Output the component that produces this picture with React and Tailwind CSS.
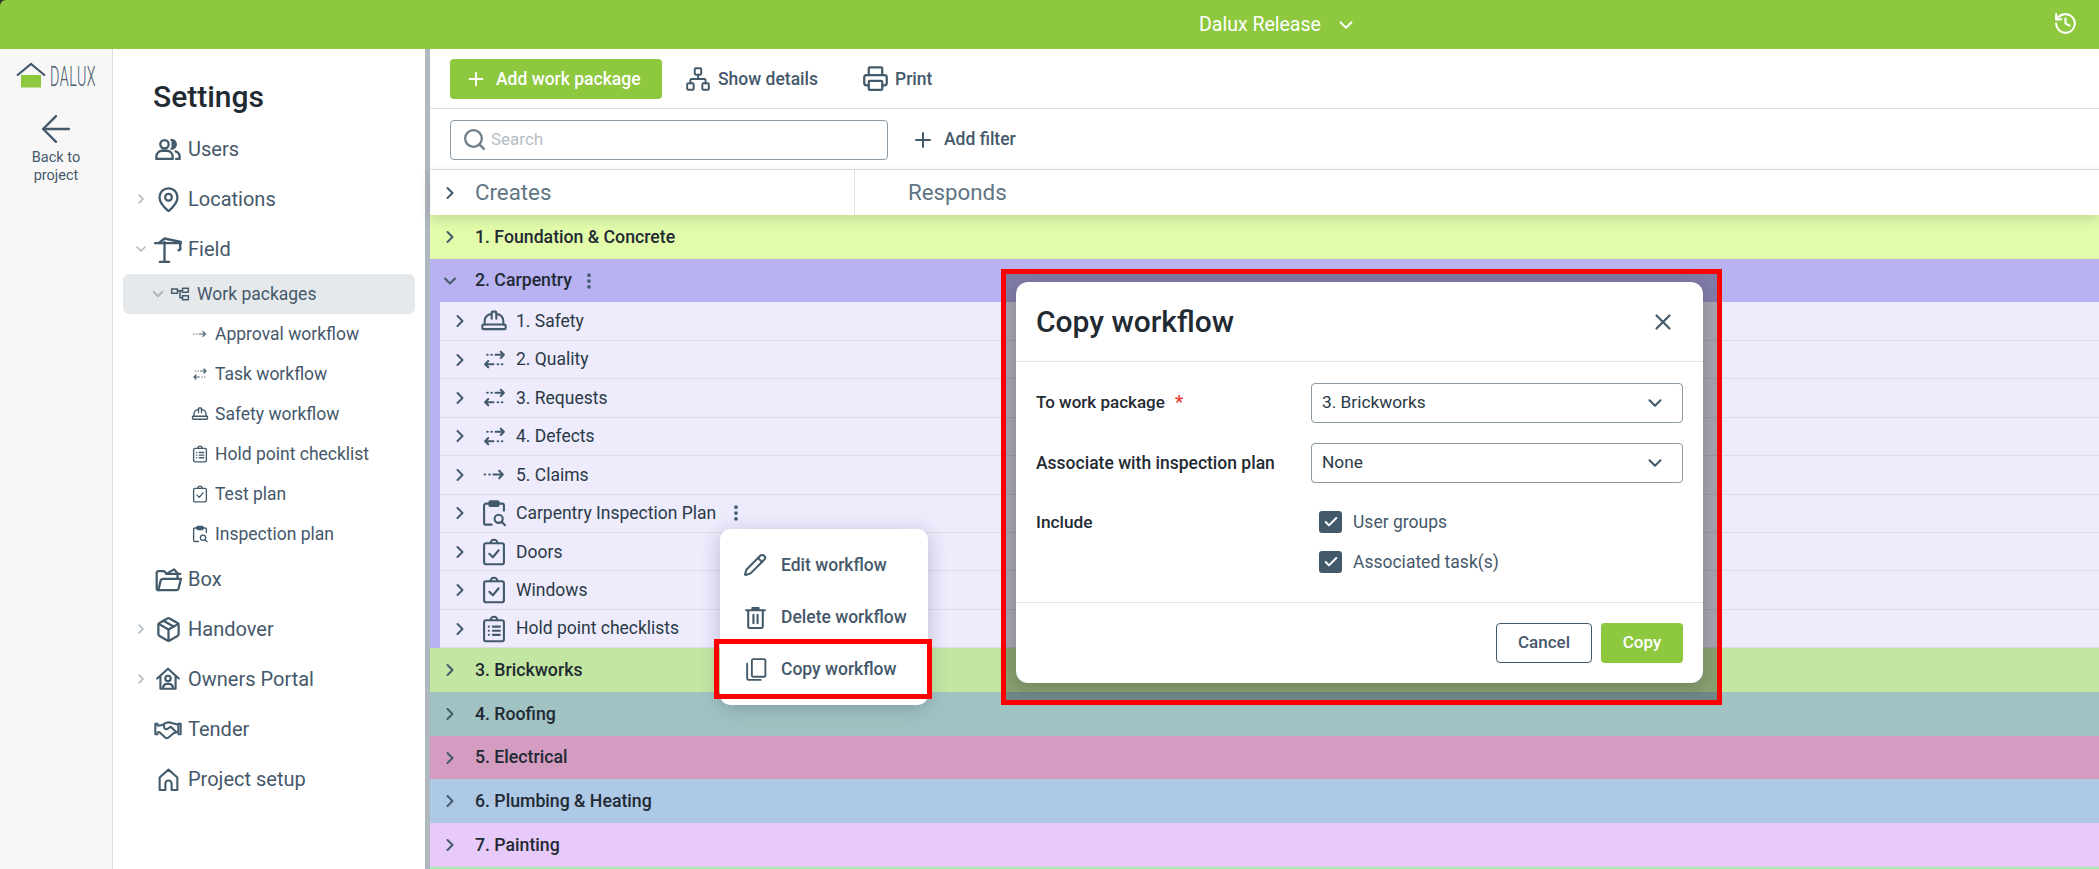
import React from "react";
import { ChevronRight, ChevronDown, MapPin, Package, HardHat, Plus, Network, Printer, Search, EllipsisVertical, Pencil, X, Check, History, ArrowLeft } from "lucide-react";

const S = ({ size = 24, sw = 2, children, className = "" }) => (
  <svg width={size} height={size} viewBox="0 0 24 24" fill="none" stroke="currentColor" strokeWidth={sw} strokeLinecap="round" strokeLinejoin="round" className={className}>{children}</svg>
);
const UsersIcon = (p) => (
  <S {...p}><circle cx="9" cy="8" r="3.6" /><path d="M2 20.5v-2a5 5 0 0 1 5-5h4a5 5 0 0 1 5 5v2z" /><path d="M15 4.3a3.7 3.7 0 0 1 0 7.4" fill="currentColor" /><path d="M18.5 14a5 5 0 0 1 3.5 4.7v1.8h-3" /></S>
);
const Crane = (p) => (
  <S {...p}><path d="M9 6v17M5 23h8M1 7h22M4 7l5-4 14 3M22.5 7v5" /><path d="M22.5 12a1.2 1.2 0 0 1-1.5 1" /></S>
);
const WorkPkg = (p) => (
  <S {...p}><rect x="2" y="6" width="7" height="5" /><rect x="15" y="5" width="7" height="5" /><rect x="15" y="14" width="7" height="5" /><path d="M9 8h3v8.500h3M12 8h3" /></S>
);
const OneWay = (p) => (
  <S {...p}><path d="M2.500 12h.5M7 12h.5M11 12h9M16.500 8.500l3.500 3.500-3.500 3.500" /></S>
);
const TwoWay = (p) => (
  <S {...p}><path d="M5 7.500h.5M9 7.500h.5M13 7.500h8M18 4.500l3 3-3 3" /><path d="M19 16.500h.5M15 16.500h.5M11 16.500h-8M6 13.500l-3 3 3 3" /></S>
);
const InspectionIcon = (p) => (
  <S {...p}><path d="M8 4H5a1.500 1.500 0 0 0-1.500 1.500v15A1.500 1.500 0 0 0 5 22h5M16 4h3a1.500 1.500 0 0 1 1.500 1.500V10" /><rect x="8" y="2" width="8" height="4" rx="1" fill="currentColor" /><circle cx="16" cy="17" r="3.500" /><path d="M18.500 19.500l3 3" /></S>
);
const ClipCheck = (p) => (
  <S {...p}><rect x="3.500" y="4.500" width="17" height="18" rx="1.800" /><path d="M9 4.500a3 3 0 0 1 6 0" /><path d="M8 13.500l3 3 5-6" /></S>
);
const ClipList = (p) => (
  <S {...p}><rect x="3.500" y="4.500" width="17" height="18" rx="1.800" /><path d="M9 4.500a3 3 0 0 1 6 0" /><path d="M7.500 10h.1M7.500 13.500h.1M7.500 17h.1M11 10h6M11 13.500h6M11 17h6" /></S>
);
const OwnersIcon = (p) => (
  <S {...p}><path d="M2 11.500L12 2.500l10 9M5 9.500V21h14V9.500" /><circle cx="12" cy="11.500" r="2.500" /><path d="M7.500 20v-.5a4 4 0 0 1 4-3h1a4 4 0 0 1 4 3v.5" /></S>
);
const SetupIcon = (p) => (
  <S {...p}><path d="M3.500 22V10L12 2.500 20.500 10v12h-5.500v-6a3 3 0 0 0-6 0v6z" /></S>
);
const BoxIcon = (p) => (
  <S {...p}><path d="M3 21.500a1.500 1.500 0 0 1-1.500-1.500V6a1.500 1.500 0 0 1 1.500-1.500h5l2.500 2.500H22.500" /><path d="M3 21.500h16a2 2 0 0 0 2-1.500l2-8.500H7a2 2 0 0 0-2 1.500L3 21.500z" /><path d="M10 7l7-4 3 3.500v5" /></S>
);
const TrashIcon = (p) => (
  <S {...p}><path d="M3 5h18M9 5V3h6v2M5 5v15.500A1.500 1.500 0 0 0 6.500 22h11a1.500 1.500 0 0 0 1.500-1.500V5M10 9.500v8M14 9.500v8" /></S>
);
const CopyIcon = (p) => (
  <S {...p}><rect x="8.500" y="2" width="13" height="17" rx="1.500" /><path d="M4 6.500v14A1.500 1.500 0 0 0 5.500 22H17" /></S>
);
const HandshakeIcon = () => (
  <svg width="30" height="23" viewBox="0 0 32 24" fill="none" stroke="currentColor" strokeWidth="2.200" strokeLinecap="round" strokeLinejoin="round">
    <path d="M5 6H2.500v11H5M27 6h2.500v11H27" />
    <path d="M5 8c3 0 5-.5 7-2s5-2 8-1l7 2v8h-2l-6-6-4 2.500a2.500 2.500 0 0 1-3-3.500" />
    <path d="M5 15h2l6 5.500a2.500 2.500 0 0 0 3.500 0l5.500-4.500 3-1" />
  </svg>
);

const MainItem = ({ icon, label, chevron }) => (
  <div className="flex items-center h-[50px] text-[20px] text-[#45586a] pl-[20px]">
    <span className="w-[16px] flex justify-center text-[#aeb6bd]">{chevron && <ChevronRight size={20} strokeWidth={2.400} />}</span>
    <span className="w-[34px] ml-[2px] flex justify-center text-[#435a6b]">{icon}</span>
    <span className="ml-[3px]">{label}</span>
  </div>
);
const SubItem = ({ icon, label }) => (
  <div className="flex items-center h-[40px] text-[17.500px] text-[#45586a] pl-[74px]">
    <span className="w-[26px] flex justify-center text-[#435a6b]">{icon}</span>
    <span className="ml-[2px]">{label}</span>
  </div>
);

const Group = ({ bg, label, open, kebab }) => (
  <div className={`flex items-center h-[43.700px] pl-[10px] text-[17.700px] font-medium text-[#1f2a33] ${bg}`}>
    <span className="w-[20px] flex justify-center text-[#435a6b]">
      {open ? <ChevronDown size={22} strokeWidth={2.400} /> : <ChevronRight size={22} strokeWidth={2.400} />}
    </span>
    <span className="ml-[15px]">{label}</span>
    {kebab && <EllipsisVertical size={20} strokeWidth={2.500} className="ml-[7px] text-[#435a6b]" />}
  </div>
);
const Row = ({ icon, label, kebab }) => (
  <div className="flex items-center h-[38.450px] pl-[10px] text-[17.500px] text-[#2a3a46] border-b border-[#dcdce4] bg-[#edebfc]">
    <span className="w-[20px] flex justify-center text-[#435a6b]"><ChevronRight size={20} strokeWidth={2.400} /></span>
    <span className="w-[30px] ml-[9px] flex justify-center text-[#435a6b]">{icon}</span>
    <span className="ml-[7px]">{label}</span>
    {kebab && <EllipsisVertical size={20} strokeWidth={2.500} className="ml-[10px] text-[#435a6b]" />}
  </div>
);

const MenuItem = ({ icon, label }) => (
  <div className="flex items-center h-[52px] pl-[22px] text-[17.500px] font-medium text-[#45586a]">
    <span className="w-[26px] flex justify-center text-[#435a6b]">{icon}</span>
    <span className="ml-[13px]">{label}</span>
  </div>
);

const Select = ({ value }) => (
  <div className="flex items-center justify-between w-[372px] h-[40px] border border-[#8a9aa5] rounded-[4px] pl-[10px] pr-[16px] text-[17.300px] text-[#2a3a46]">
    <span>{value}</span>
    <ChevronDown size={22} strokeWidth={2.300} className="text-[#435a6b]" />
  </div>
);
const Cb = ({ label }) => (
  <div className="flex items-center h-[22px] pl-[8px]">
    <span className="w-[23px] h-[22px] rounded-[3px] bg-[#435a6b] flex items-center justify-center text-white"><Check size={16} strokeWidth={3} /></span>
    <span className="ml-[11px] text-[17.500px] text-[#45586a]">{label}</span>
  </div>
);

export default function App() {
  return (
    <div className="relative w-[2099px] h-[869px] overflow-hidden bg-[#333] [font-family:Roboto,sans-serif]">
      <div className="relative flex items-center h-[49px] pl-[1199px] bg-[#8dc83f] rounded-tl-[6px] text-white text-[19.500px]">
        <span>Dalux Release</span>
        <ChevronDown size={22} strokeWidth={2} className="ml-[14px]" />
        <History size={25} strokeWidth={2} className="absolute right-[21px] top-[11px]" />
      </div>
      <div className="flex h-[820px] bg-white">
        <aside className="w-[113px] shrink-0 bg-[#f7f7f7] border-r border-[#d8dee3] flex flex-col items-center">
          <div className="flex items-center h-[28px] mt-[12px] w-full pl-[16px]">
            <svg width="30" height="26" viewBox="0 0 30 26" className="shrink-0">
              <rect x="5" y="13" width="20" height="12.500" fill="#8dc83f" />
              <path d="M1 13.500L15 2l14 11.500" fill="none" stroke="#45586a" strokeWidth="2.200" />
            </svg>
            <span className="ml-[4px] mt-[4px] text-[27px] font-light text-[#45586a] leading-none inline-block origin-left scale-x-[0.53] tracking-[1px]">DALUX</span>
          </div>
          <ArrowLeft size={44} strokeWidth={1.300} className="text-[#45586a] mt-[18px]" />
          <div className="text-[14.500px] leading-[18px] text-[#45586a] text-center -mt-[2px]">Back to<br />project</div>
        </aside>
        <nav className="w-[312px] shrink-0 bg-white">
          <div className="h-[75px] pl-[40px] pt-[25px] text-[30px] leading-[46px] font-medium text-[#1f2a33]">Settings</div>
          <MainItem icon={<UsersIcon size={28} />} label="Users" />
          <MainItem chevron icon={<MapPin size={27} strokeWidth={2} />} label="Locations" />
          <div className="flex items-center h-[50px] text-[20px] text-[#45586a] pl-[20px]">
            <span className="w-[16px] flex justify-center text-[#aeb6bd]"><ChevronDown size={20} strokeWidth={2.400} /></span>
            <span className="w-[34px] ml-[2px] flex justify-center text-[#435a6b]"><Crane size={28} sw={2} /></span>
            <span className="ml-[3px]">Field</span>
          </div>
          <div className="flex items-center h-[40px] mx-[10px] rounded-[6px] bg-[#e6e9ec] text-[17.500px] text-[#45586a] pl-[26px]">
            <ChevronDown size={18} strokeWidth={2.400} className="text-[#aeb6bd]" />
            <span className="w-[20px] ml-[3px] flex justify-center text-[#435a6b]"><WorkPkg size={20} sw={1.800} /></span>
            <span className="ml-[7px]">Work packages</span>
          </div>
          <SubItem icon={<OneWay size={16} sw={1.800} />} label="Approval workflow" />
          <SubItem icon={<TwoWay size={16} sw={1.800} />} label="Task workflow" />
          <SubItem icon={<HardHat size={18} strokeWidth={1.800} />} label="Safety workflow" />
          <SubItem icon={<ClipList size={18} sw={1.800} />} label="Hold point checklist" />
          <SubItem icon={<ClipCheck size={18} sw={1.800} />} label="Test plan" />
          <SubItem icon={<InspectionIcon size={18} sw={1.800} />} label="Inspection plan" />
          <MainItem icon={<BoxIcon size={27} sw={2} />} label="Box" />
          <MainItem chevron icon={<Package size={27} strokeWidth={2} />} label="Handover" />
          <MainItem chevron icon={<OwnersIcon size={26} sw={2} />} label="Owners Portal" />
          <MainItem icon={<HandshakeIcon />} label="Tender" />
          <MainItem icon={<SetupIcon size={25} sw={2} />} label="Project setup" />
        </nav>
        <div className="w-[5px] shrink-0 bg-[#b0b8bf]" />
        <main className="flex-1 min-w-0 flex flex-col">
          <div className="flex items-center h-[60px] pl-[20px] border-b border-[#e0e0e0] shrink-0">
            <button className="flex items-center w-[212px] h-[40px] rounded-[4px] bg-[#8dc83f] text-white text-[17.500px] font-medium pl-[15px]">
              <Plus size={22} strokeWidth={2} />
              <span className="ml-[9px] mt-[1px]">Add work package</span>
            </button>
            <span className="ml-[23px] text-[#435a6b]"><Network size={26} strokeWidth={1.800} /></span>
            <span className="ml-[7px] mt-[1px] text-[17.500px] font-medium text-[#45586a]">Show details</span>
            <span className="ml-[44px] text-[#435a6b]"><Printer size={27} strokeWidth={2} /></span>
            <span className="ml-[6px] mt-[1px] text-[17.500px] font-medium text-[#45586a]">Print</span>
          </div>
          <div className="flex items-center h-[61px] pl-[20px] pt-[1px] border-b border-[#e0e0e0] shrink-0">
            <div className="flex items-center w-[438px] h-[40px] border border-[#8a9aa5] rounded-[4px] pl-[11px]">
              <Search size={25} strokeWidth={2.200} className="text-[#6c7f8c]" />
              <span className="ml-[4px] text-[17px] text-[#b5bdc4]">Search</span>
            </div>
            <Plus size={24} strokeWidth={2} className="ml-[23px] text-[#435a6b]" />
            <span className="ml-[9px] text-[17.500px] font-medium text-[#45586a]">Add filter</span>
          </div>
          <div className="relative z-10 flex h-[45px] shrink-0 bg-white shadow-[0_4px_12px_rgba(0,0,0,0.15)]">
            <div className="flex items-center w-[425px] border-r border-[#dfe3e6] pl-[10px]">
              <span className="w-[20px] flex justify-center text-[#435a6b]"><ChevronRight size={22} strokeWidth={2.400} /></span>
              <span className="ml-[15px] text-[22.300px] text-[#5f7583]">Creates</span>
            </div>
            <div className="flex items-center pl-[53px] text-[22.300px] text-[#5f7583]">Responds</div>
          </div>
          <Group bg="bg-[#e2fcab]" label="1. Foundation & Concrete" />
          <Group bg="bg-[#b8b2f3]" label="2. Carpentry" open kebab />
          <div className="pl-[10px] bg-[#b8b2f3]">
            <Row icon={<HardHat size={28} strokeWidth={1.800} />} label="1. Safety" />
            <Row icon={<TwoWay size={25} sw={2} />} label="2. Quality" />
            <Row icon={<TwoWay size={25} sw={2} />} label="3. Requests" />
            <Row icon={<TwoWay size={25} sw={2} />} label="4. Defects" />
            <Row icon={<OneWay size={25} sw={2} />} label="5. Claims" />
            <Row icon={<InspectionIcon size={28} sw={1.800} />} label="Carpentry Inspection Plan" kebab />
            <Row icon={<ClipCheck size={28} sw={1.800} />} label="Doors" />
            <Row icon={<ClipCheck size={28} sw={1.800} />} label="Windows" />
            <Row icon={<ClipList size={28} sw={1.800} />} label="Hold point checklists" />
          </div>
          <Group bg="bg-[#c3e6a2]" label="3. Brickworks" />
          <Group bg="bg-[#a2c3c3]" label="4. Roofing" />
          <Group bg="bg-[#d49cc0]" label="5. Electrical" />
          <Group bg="bg-[#aec9e6]" label="6. Plumbing & Heating" />
          <Group bg="bg-[#e7caf9]" label="7. Painting" />
          <div className="flex-1 bg-[#a0f0b0]" />
        </main>
      </div>

      {/* context menu */}
      <div className="absolute z-20 left-[720px] top-[529px] w-[208px] h-[176px] py-[10px] bg-white rounded-[10px] shadow-[0_4px_20px_rgba(40,50,80,0.25)]">
        <MenuItem icon={<Pencil size={24} strokeWidth={2} />} label="Edit workflow" />
        <MenuItem icon={<TrashIcon size={25} sw={2} />} label="Delete workflow" />
        <MenuItem icon={<CopyIcon size={25} sw={1.800} />} label="Copy workflow" />
      </div>
      <div className="absolute z-30 left-[714px] top-[639px] w-[218px] h-[60px] border-[5px] border-[#ff0000]" />

      {/* modal crop */}
      <div className="absolute z-40 left-[1001px] top-[269px] w-[721px] h-[436px] border-[5px] border-[#ff0000] bg-black/30 flex items-start pl-[10px] pt-[8px]">
        <div className="w-[687px] h-[401px] bg-white rounded-[12px] flex flex-col shadow-[0_4px_20px_rgba(0,0,0,0.2)]">
          <div className="flex items-center justify-between h-[80px] border-b border-[#dfe4e8] pl-[20px] pr-[27px] shrink-0">
            <span className="text-[30px] font-medium text-[#1f2a33]">Copy workflow</span>
            <X size={26} strokeWidth={2} className="text-[#435a6b]" />
          </div>
          <div className="flex-1 relative pl-[20px] pr-[20px]">
            <div className="flex items-center justify-between mt-[21px]">
              <span className="text-[17px] font-medium text-[#1f2a33]">To work package <span className="text-[#e53935] text-[18px] ml-[6px] font-bold leading-none">*</span></span>
              <Select value="3. Brickworks" />
            </div>
            <div className="flex items-center justify-between mt-[20px]">
              <span className="text-[17.500px] font-medium text-[#1f2a33]">Associate with inspection plan</span>
              <Select value="None" />
            </div>
            <div className="flex items-start mt-[28px]">
              <span className="text-[17.300px] font-medium text-[#1f2a33] w-[275px] leading-[22px]">Include</span>
              <div className="flex flex-col gap-[18px]">
                <Cb label="User groups" />
                <Cb label="Associated task(s)" />
              </div>
            </div>
          </div>
          <div className="flex items-center justify-end gap-[9px] h-[81px] border-t border-[#dfe4e8] pr-[20px] shrink-0">
            <button className="w-[96px] h-[40px] rounded-[4px] border border-[#435a6b] text-[17px] font-medium text-[#45586a]">Cancel</button>
            <button className="w-[82px] h-[40px] rounded-[4px] bg-[#8dc83f] text-[17px] font-medium text-white">Copy</button>
          </div>
        </div>
      </div>
    </div>
  );
}
